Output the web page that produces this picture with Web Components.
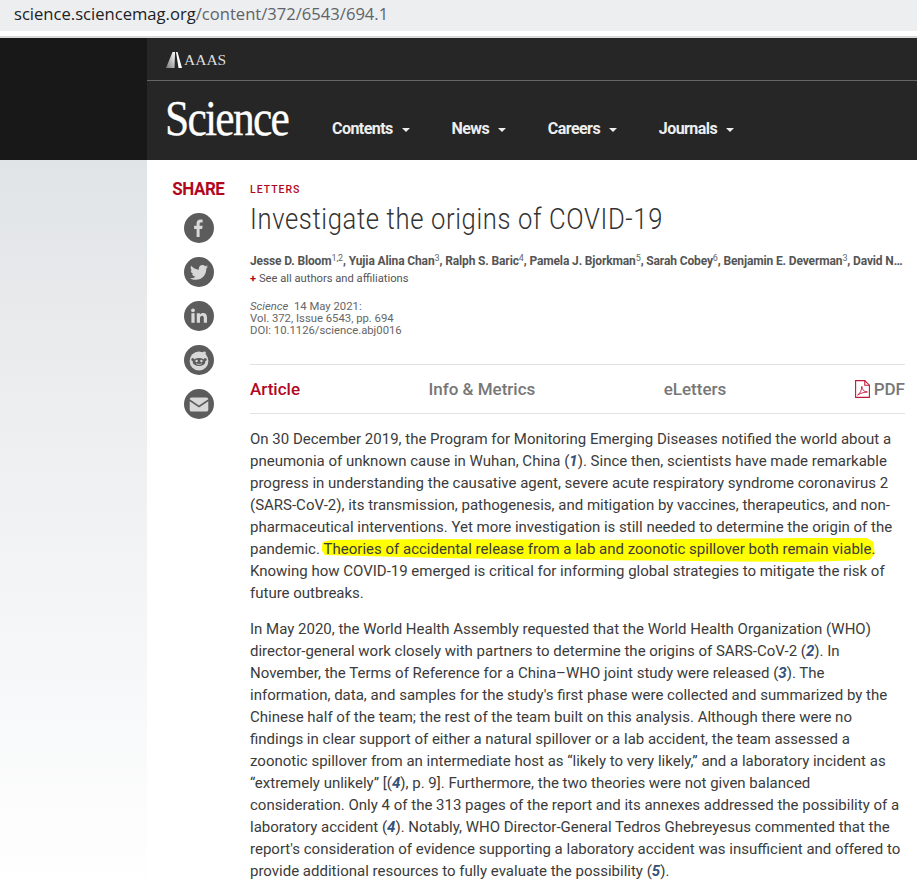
<!DOCTYPE html>
<html lang="en">
<head>
<meta charset="utf-8">
<title>Investigate the origins of COVID-19</title>
<style>
  html, body { margin: 0; padding: 0; background: #fff; }
  body { width: 917px; height: 882px; overflow: hidden; font-family: Roboto, "Liberation Sans", sans-serif; }
</style>
</head>
<body>
<url-bar></url-bar>
<site-header>
  <nav-item>Contents</nav-item>
  <nav-item>News</nav-item>
  <nav-item>Careers</nav-item>
  <nav-item>Journals</nav-item>
</site-header>
<page-layout>
  <share-rail slot="rail">
    <share-icon kind="facebook"></share-icon>
    <share-icon kind="twitter"></share-icon>
    <share-icon kind="linkedin"></share-icon>
    <share-icon kind="reddit"></share-icon>
    <share-icon kind="mail"></share-icon>
  </share-rail>
  <article-head></article-head>
  <article-tabs></article-tabs>
  <article-body>
    <p>On 30 December 2019, the Program for Monitoring Emerging Diseases notified the world about a<br>
    pneumonia of unknown cause in Wuhan, China (<cite-ref>1</cite-ref>). Since then, scientists have made remarkable<br>
    progress in understanding the causative agent, severe acute respiratory syndrome coronavirus 2<br>
    (SARS-CoV-2), its transmission, pathogenesis, and mitigation by vaccines, therapeutics, and non-<br>
    pharmaceutical interventions. Yet more investigation is still needed to determine the origin of the<br>
    pandemic. <marker-text>Theories of accidental release from a lab and zoonotic spillover both remain viable.</marker-text><br>
    Knowing how COVID-19 emerged is critical for informing global strategies to mitigate the risk of<br>
    future outbreaks.</p>
    <p>In May 2020, the World Health Assembly requested that the World Health Organization (WHO)<br>
    director-general work closely with partners to determine the origins of SARS-CoV-2 (<cite-ref>2</cite-ref>). In<br>
    November, the Terms of Reference for a China–WHO joint study were released (<cite-ref>3</cite-ref>). The<br>
    information, data, and samples for the study's first phase were collected and summarized by the<br>
    Chinese half of the team; the rest of the team built on this analysis. Although there were no<br>
    findings in clear support of either a natural spillover or a lab accident, the team assessed a<br>
    zoonotic spillover from an intermediate host as “likely to very likely,” and a laboratory incident as<br>
    “extremely unlikely” [(<cite-ref>4</cite-ref>), p. 9]. Furthermore, the two theories were not given balanced<br>
    consideration. Only 4 of the 313 pages of the report and its annexes addressed the possibility of a<br>
    laboratory accident (<cite-ref>4</cite-ref>). Notably, WHO Director-General Tedros Ghebreyesus commented that the<br>
    report's consideration of evidence supporting a laboratory accident was insufficient and offered to<br>
    provide additional resources to fully evaluate the possibility (<cite-ref>5</cite-ref>).</p>
  </article-body>
</page-layout>
<script>
const define = (name, css, html) => {
  customElements.define(name, class extends HTMLElement {
    constructor() {
      super();
      const root = this.attachShadow({ mode: 'open' });
      root.innerHTML = `<style>${css}</style>${typeof html === 'function' ? html(this) : html}`;
    }
  });
};

define('url-bar', `
  :host { display: block; height: 38px; background: #fff; border-bottom: 2px solid #d9d9d9; box-sizing: border-box; }
  div { height: 31px; background: #eceef0; padding-left: 14px; font: 16.6px/28px "Open Sans", sans-serif; color: #5f6368; }
  b { font-weight: 400; color: #202124; }
`, `<div><b>science.sciencemag.org</b>/content/372/6543/694.1</div>`);

define('site-header', `
  :host { display: grid; grid-template-columns: 147px 1fr; height: 122px; background: #181818; }
  .bar { background: #262626; }
  .aaas { height: 43px; box-sizing: border-box; border-bottom: 1px solid #666; padding: 1px 0 0 19px; display: flex; align-items: center; gap: 2px; color: #ddd; font: 15.5px/1 "Liberation Serif", serif; }
  .main { display: flex; align-items: flex-start; padding-left: 18px; }
  .logo { font: 50px/1 "Liberation Serif", serif; color: #fff; letter-spacing: -2px; width: 167px; padding-top: 12px; transform: scaleX(.87); transform-origin: left top; -webkit-text-stroke: .3px #fff; }
  nav { display: flex; gap: 41.7px; padding-top: 38px; }
  svg { display: block; }
`, `
  <div></div>
  <div class="bar">
    <div class="aaas">
      <svg width="16" height="16" viewBox="0 0 16 16">
        <defs><linearGradient id="mark" x1="0" y1="1" x2="1" y2="0"><stop offset="0" stop-color="#777"/><stop offset="1" stop-color="#fff"/></linearGradient></defs>
        <path d="M0 16 6.5 0H9L8.5 16z" fill="url(#mark)"/><path d="M10 0h1.5L16 16h-3.5z" fill="#fff"/>
      </svg>
      <span>AAAS</span>
    </div>
    <div class="main">
      <div class="logo">Science</div>
      <nav><slot></slot></nav>
    </div>
  </div>`);

define('nav-item', `
  :host { display: flex; align-items: center; gap: 9px; font: 700 16px/20px Roboto, sans-serif; color: #eee; letter-spacing: -0.55px; }
  i { width: 0; height: 0; border: 4px solid transparent; border-top-color: #eee; border-bottom: 0; margin-top: 2px; }
`, `<slot></slot><i></i>`);

define('page-layout', `
  :host { display: grid; grid-template-columns: 147px 78px 1fr; height: 722px; overflow: hidden; }
  .gutter { background: linear-gradient(#e0e4e6 0, #e7e9eb 18%, #eef0f2 42%, #f6f7f9 68%, #fdfdfd 92%, #fff 100%); }
  .content { padding: 0 12px 0 25px; min-width: 0; }
`, `
  <div class="gutter"></div>
  <slot name="rail"></slot>
  <div class="content"><slot></slot></div>`);

define('share-rail', `
  :host { display: flex; flex-direction: column; align-items: center; gap: 14px; padding: 18px 0 0 25px; }
  h2 { margin: 0 0 -1px; font: 700 18.4px/22px Roboto, sans-serif; letter-spacing: -0.45px; color: #b1081f; transform: scaleX(.92); }
`, `<h2>SHARE</h2><slot></slot>`);

const GLYPHS = {
  facebook: `<path fill="#d8d8d8" d="M12.6 24V16h-2.5v-3.3h2.5v-2.4c0-2.6 1.6-3.9 3.8-3.9.9 0 1.9.1 2.2.2v2.9h-1.5c-1.2 0-1.5.6-1.5 1.5v1.7h3l-.4 3.3h-2.6v8z"/>`,
  twitter: `<g transform="translate(4.6 4.6) scale(.87)"><path fill="#d8d8d8" d="M22.46 6c-.77.35-1.6.58-2.46.69.88-.53 1.56-1.37 1.88-2.38-.83.5-1.75.85-2.72 1.05C18.37 4.5 17.26 4 16 4c-2.35 0-4.27 1.92-4.27 4.29 0 .34.04.67.11.98C8.28 9.09 5.11 7.38 3 4.79c-.37.63-.58 1.37-.58 2.15 0 1.49.75 2.81 1.91 3.56-.71 0-1.37-.2-1.91-.5v.03c0 2.08 1.48 3.82 3.44 4.21a4.22 4.22 0 0 1-1.93.07 4.28 4.28 0 0 0 4 2.98 8.521 8.521 0 0 1-5.33 1.84c-.34 0-.68-.02-1.02-.06C3.44 20.29 5.7 21 8.12 21 16 21 20.33 14.46 20.33 8.79c0-.19 0-.37-.01-.56.84-.6 1.56-1.36 2.14-2.23z"/></g>`,
  linkedin: `<g fill="#d8d8d8"><circle cx="9" cy="9.3" r="1.9"/><rect x="7.4" y="12.2" width="3.2" height="9.6"/><path d="M12.8 12.2h3.1v1.4c.6-1 1.7-1.7 3.2-1.7 2.8 0 3.9 1.8 3.9 4.7v5.2h-3.2v-4.7c0-1.4-.4-2.4-1.7-2.4-1.4 0-2.1 1-2.1 2.5v4.6h-3.2z"/></g>`,
  reddit: `<circle cx="15" cy="16" r="9.4" fill="#d8d8d8"/><circle cx="20.5" cy="7.8" r="1.4" fill="#d8d8d8"/><path d="M15 11.5 16 7.5l4 .6" fill="none" stroke="#d8d8d8" stroke-width=".9"/><ellipse cx="15" cy="17" rx="6.4" ry="4" fill="#5c5c5c"/><circle cx="8.8" cy="14.6" r="1.5" fill="#5c5c5c"/><circle cx="21.2" cy="14.6" r="1.5" fill="#5c5c5c"/><circle cx="12.6" cy="16" r="1.2" fill="#d8d8d8"/><circle cx="17.4" cy="16" r="1.2" fill="#d8d8d8"/><path d="M12.2 18.6c1.6 1.1 4 1.1 5.6 0" fill="none" stroke="#d8d8d8" stroke-width=".8"/>`,
  mail: `<path fill="#d8d8d8" d="M7.6 8.5h14.8c1.1 0 1.9.8 1.9 1.8L15 16.4 5.7 10.3c0-1 .8-1.8 1.9-1.8z"/><path fill="#d8d8d8" d="M5.7 12.3 15 18.4l9.3-6.1v8.4c0 1-.8 1.8-1.9 1.8H7.6c-1.1 0-1.9-.8-1.9-1.8z"/>`
};

define('share-icon', `
  :host { display: block; width: 30px; height: 30px; }
  svg { display: block; }
`, el => `<svg width="30" height="30" viewBox="0 0 30 30"><circle cx="15" cy="15" r="15" fill="#5c5c5c"/>${GLYPHS[el.getAttribute('kind')]}</svg>`);

define('article-head', `
  :host { display: block; padding-top: 24px; height: 204px; box-sizing: border-box; }
  .kicker { font: 500 10.5px/12px Roboto, sans-serif; letter-spacing: 1px; color: #b1081f; }
  h1 { margin: 5px 0 0; font: 300 30.4px/36px Roboto, sans-serif; letter-spacing: .75px; color: #333; width: max-content; transform: scaleX(.843); transform-origin: left center; }
  .authors { margin-top: 16px; font: 700 12px/16px Roboto, sans-serif; color: #555; letter-spacing: -0.13px; white-space: nowrap; }
  sup { font-weight: 400; font-size: 9px; line-height: 0; color: #666; vertical-align: 4px; }
  .all { margin-top: 3px; font: 400 11.2px/14px Roboto, sans-serif; color: #555; }
  .all b { color: #b1081f; }
  .cite { margin-top: 15px; font: 400 11.3px/12px Roboto, sans-serif; color: #666; }
`, `
  <div class="kicker">LETTERS</div>
  <h1>Investigate the origins of COVID-19</h1>
  <div class="authors">Jesse D. Bloom<sup>1,2</sup>, Yujia Alina Chan<sup>3</sup>, Ralph S. Baric<sup>4</sup>, Pamela J. Bjorkman<sup>5</sup>, Sarah Cobey<sup>6</sup>, Benjamin E. Deverman<sup>3</sup>, David N…</div>
  <div class="all"><b>+</b> See all authors and affiliations</div>
  <div class="cite"><i>Science</i>&nbsp; 14 May 2021:<br>Vol. 372, Issue 6543, pp. 694<br>DOI: 10.1126/science.abj0016</div>`);

define('article-tabs', `
  :host { display: flex; justify-content: space-between; align-items: center; height: 50px; box-sizing: border-box; border-top: 1px solid #e2e2e2; border-bottom: 1px solid #e2e2e2; font: 500 17px/20px Roboto, sans-serif; color: #777; }
  .on { color: #b1081f; }
  .pdf { display: flex; align-items: center; gap: 4px; }
  svg { display: block; }
`, `
  <span class="on">Article</span>
  <span>Info &amp; Metrics</span>
  <span>eLetters</span>
  <span class="pdf">
    <svg width="15" height="18" viewBox="0 0 15 18" fill="none" stroke="#c3173a" stroke-width="1.1"><path d="M.6.6h9.2l4.6 4.6v12.2H.6z"/><path d="M9.8.6v4.6h4.6"/><path d="M2.6 15c2.6-1.6 4-4.6 4.2-8.6.5 3.4 2 5.4 5.6 5.6-3.4.2-6.2 1-9.8 3z" stroke-width=".9"/></svg>
    PDF
  </span>`);

define('article-body', `
  :host { display: block; padding-top: 14px; font: 400 15px/22px Roboto, sans-serif; color: #3b3b3b; }
  ::slotted(p) { margin: 0 0 14px; }
`, `<slot></slot>`);

define('cite-ref', `
  :host { font-weight: 700; font-style: italic; color: #34527c; }
`, `<slot></slot>`);

// marker stroke sits behind the sentence, wider towards the right like the real highlighter
define('marker-text', `
  :host { position: relative; isolation: isolate; }
  :host::before {
    content: ''; position: absolute; z-index: -1; left: -2px; right: -2px; top: -4px; bottom: -6px;
    background: #ffff00;
    clip-path: polygon(1px 6px, 10px 4px, 118px 3px, 278px 4px, 478px 2px, 545px 2px, 552px 6px, 553px 18px, 548px 24px, 478px 26px, 278px 24px, 118px 22px, 3px 19px, 0 14px);
  }
`, `<slot></slot>`);
</script>
</body>
</html>
